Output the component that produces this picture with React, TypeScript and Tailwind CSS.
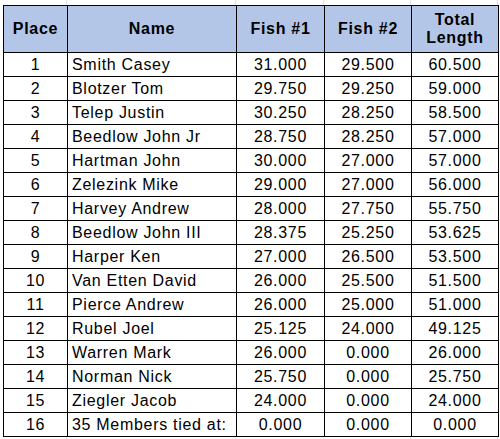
import React from "react";

type Row = {
  place: number;
  name: string;
  fish1: string;
  fish2: string;
  total: string;
};

const rows: Row[] = [
  { place: 1, name: "Smith Casey", fish1: "31.000", fish2: "29.500", total: "60.500" },
  { place: 2, name: "Blotzer Tom", fish1: "29.750", fish2: "29.250", total: "59.000" },
  { place: 3, name: "Telep Justin", fish1: "30.250", fish2: "28.250", total: "58.500" },
  { place: 4, name: "Beedlow John Jr", fish1: "28.750", fish2: "28.250", total: "57.000" },
  { place: 5, name: "Hartman John", fish1: "30.000", fish2: "27.000", total: "57.000" },
  { place: 6, name: "Zelezink Mike", fish1: "29.000", fish2: "27.000", total: "56.000" },
  { place: 7, name: "Harvey Andrew", fish1: "28.000", fish2: "27.750", total: "55.750" },
  { place: 8, name: "Beedlow John III", fish1: "28.375", fish2: "25.250", total: "53.625" },
  { place: 9, name: "Harper Ken", fish1: "27.000", fish2: "26.500", total: "53.500" },
  { place: 10, name: "Van Etten David", fish1: "26.000", fish2: "25.500", total: "51.500" },
  { place: 11, name: "Pierce Andrew", fish1: "26.000", fish2: "25.000", total: "51.000" },
  { place: 12, name: "Rubel Joel", fish1: "25.125", fish2: "24.000", total: "49.125" },
  { place: 13, name: "Warren Mark", fish1: "26.000", fish2: "0.000", total: "26.000" },
  { place: 14, name: "Norman Nick", fish1: "25.750", fish2: "0.000", total: "25.750" },
  { place: 15, name: "Ziegler Jacob", fish1: "24.000", fish2: "0.000", total: "24.000" },
  { place: 16, name: "35 Members tied at:", fish1: "0.000", fish2: "0.000", total: "0.000" },
];

// faint sheet gridlines around the table
const GridStrip = ({ h }: { h: string }) => (
  <div className={`flex ${h}`}>
    <div className="w-[67px] border-r border-[#e1e1e1]" />
    <div className="w-[169px] border-r border-[#e1e1e1]" />
    <div className="w-[88px] border-r border-[#e1e1e1]" />
    <div className="w-[87px] border-r border-[#e1e1e1]" />
    <div className="w-[87px] border-r border-[#e1e1e1]" />
  </div>
);

const App: React.FC = () => {
  return (
    <div className="w-[500px] h-[439px] bg-white overflow-hidden font-['Liberation_Sans',Arial,sans-serif] text-black text-[16px] tracking-[0.7px]">
      <GridStrip h="h-[5px]" />
      <table className="ml-[3px] table-fixed border-collapse w-[495px]">
        <colgroup>
          <col className="w-[64px]" />
          <col className="w-[169px]" />
          <col className="w-[88px]" />
          <col className="w-[87px]" />
          <col className="w-[87px]" />
        </colgroup>
        <thead>
          <tr className="bg-[#b4c6e7] h-[47px] font-bold">
            <th className="border border-black text-center p-0">Place</th>
            <th className="border border-black text-center p-0">Name</th>
            <th className="border border-black text-center p-0">Fish #1</th>
            <th className="border border-black text-center p-0">Fish #2</th>
            <th className="border border-black text-center p-0 leading-[18px]">
              Total
              <br />
              Length
            </th>
          </tr>
        </thead>
        <tbody>
          {rows.map((row) => (
            <tr key={row.place} className="h-[24px] leading-[18px]">
              <td className="border border-black text-center p-0">{row.place}</td>
              <td className="border border-black pl-[4px] p-0 whitespace-nowrap">{row.name}</td>
              <td className="border border-black text-center p-0">{row.fish1}</td>
              <td className="border border-black text-center p-0">{row.fish2}</td>
              <td className="border border-black text-center p-0">{row.total}</td>
            </tr>
          ))}
        </tbody>
      </table>
      <div className="border-b border-[#e1e1e1] h-[3px]">
        <GridStrip h="h-[3px]" />
      </div>
    </div>
  );
};

export default App;
